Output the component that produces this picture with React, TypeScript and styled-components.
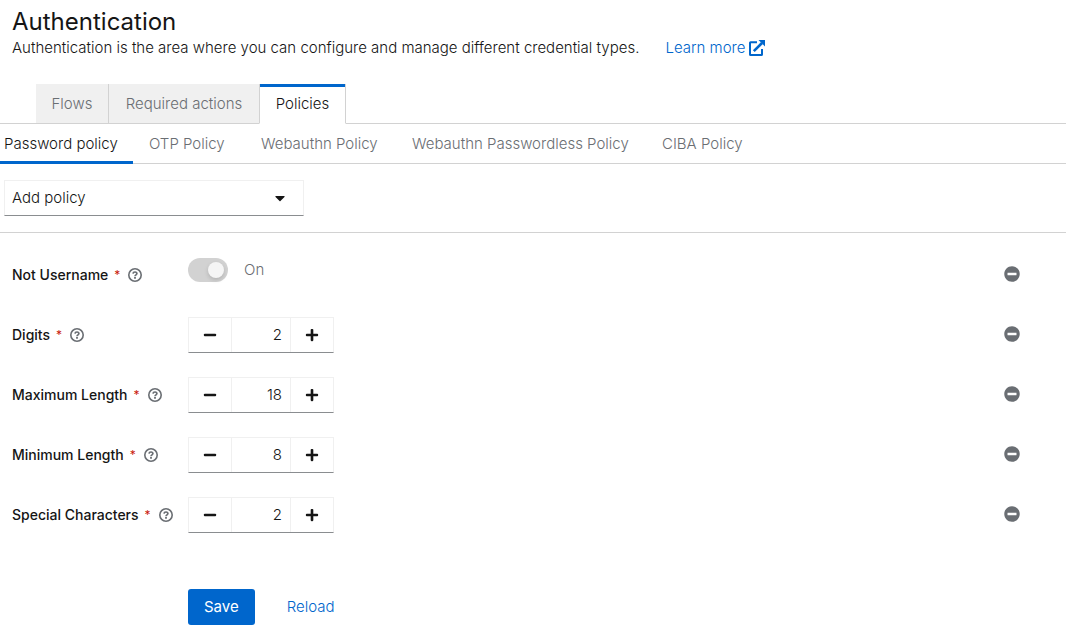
import React, { useId, useState } from 'react';
import styled, { createGlobalStyle, css } from 'styled-components';
import { FaCaretDown, FaMinus, FaMinusCircle, FaPlus } from 'react-icons/fa';

const GlobalStyle = createGlobalStyle`
  *, *::before, *::after { box-sizing: border-box; }
  body {
    margin: 0;
    background: #fff;
    color: #151515;
    font: 300 15px/24px Inter, "Liberation Sans", sans-serif;
  }
  button, input, select { font: inherit; color: inherit; margin: 0; }
  button { cursor: pointer; }
`;

const Header = styled.header`
  padding: 7px 12px 24px;
`;

const Title = styled.h1`
  margin: 0;
  font-size: 24px;
  line-height: 29px;
  font-weight: 400;
`;

const Description = styled.p`
  display: flex;
  align-items: center;
  gap: 26px;
  margin: 0;
`;

const DocLink = styled.a`
  display: inline-flex;
  align-items: center;
  gap: 4px;
  color: #06c;
  text-decoration: none;
`;

const BoxTabs = styled.nav`
  display: flex;
  padding-left: 36px;
  border-bottom: 1px solid #d2d2d2;
`;

const BoxTab = styled.button<{ $width: number; $active?: boolean }>`
  min-width: ${p => p.$width}px;
  height: 40px;
  margin-bottom: -1px;
  padding: 0 15px;
  border: 0;
  border-right: 1px solid #d2d2d2;
  border-bottom: 1px solid #d2d2d2;
  background: #f0f0f0;
  color: #6a6e73;
  &:nth-last-child(2) { border-right: 0; }
  ${p => p.$active && css`
    border-left: 1px solid #d2d2d2;
    border-bottom-color: #fff;
    background: linear-gradient(#fff, #fff) padding-box;
    color: #151515;
    box-shadow: inset 0 3px #06c;
  `}
`;

const LineTabs = styled.nav`
  display: flex;
  border-bottom: 1px solid #d2d2d2;
`;

const LineTab = styled.button<{ $width: number; $active?: boolean }>`
  min-width: ${p => p.$width}px;
  height: 40px;
  margin-bottom: -1px;
  padding: 0 15px 0 16px;
  border: 0;
  background: none;
  color: #6a6e73;
  text-align: left;
  &:first-child { padding-left: 4px; }
  ${p => p.$active && css`
    color: #151515;
    box-shadow: inset 0 -3px #06c;
  `}
`;

const Toolbar = styled.div`
  padding: 16px 4px;
  border-bottom: 1px solid #d2d2d2;
`;

const SelectBox = styled.div`
  display: grid;
  width: 300px;
  align-items: center;
  > * { grid-area: 1 / 1; }
  > svg { justify-self: end; margin-right: 16px; pointer-events: none; }
`;

const PolicySelect = styled.select`
  width: 100%;
  height: 36px;
  padding: 0 7px;
  appearance: none;
  border: 1px solid #f0f0f0;
  border-bottom-color: #8a8d90;
  border-radius: 0;
  background: #fff;
`;

const Form = styled.form`
  display: grid;
  gap: 24px;
  padding: 24px 38px 12px 12px;
`;

const Row = styled.div`
  display: grid;
  grid-template-columns: 176px 1fr auto;
  min-height: 36px;
`;

const LabelCell = styled.div`
  display: flex;
  align-items: center;
  font-size: 14px;
  font-weight: 500;
`;

const Required = styled.span`
  margin: 0 8px 0 6px;
  color: #c9190b;
  font-size: 12px;
  font-weight: 400;
`;

const IconButton = styled.button`
  display: flex;
  align-items: center;
  justify-content: center;
  padding: 0;
  border: 0;
  background: none;
  color: #6a6e73;
`;

const RemoveButton = styled(IconButton)`
  width: 32px;
  height: 34px;
  font-size: 16px;
`;

const Stepper = styled.div`
  display: flex;
  justify-self: start;
  height: 36px;
  border: 1px solid #f0f0f0;
  border-bottom-color: #8a8d90;
`;

const StepButton = styled.button`
  display: flex;
  align-items: center;
  justify-content: center;
  width: 42px;
  padding: 0;
  border: 0;
  background: none;
  font-size: 14px;
`;

const StepInput = styled.input`
  width: 60px;
  padding: 0 8px;
  border: solid #f0f0f0;
  border-width: 0 1px;
  border-radius: 0;
  background: none;
  text-align: right;
  appearance: textfield;
  &::-webkit-inner-spin-button { appearance: none; margin: 0; }
`;

const Toggle = styled.label`
  display: flex;
  align-items: center;
  align-self: start;
  gap: 16px;
  height: 26px;
  color: #6a6e73;
`;

const ToggleInput = styled.input`
  width: 40px;
  height: 24px;
  padding: 4px;
  appearance: none;
  border-radius: 12px;
  background: #d2d2d2;
  &::before {
    content: "";
    display: block;
    width: 16px;
    height: 16px;
    border-radius: 8px;
    background: #f5f5f5;
    box-shadow: 0 2px 4px rgba(3, 3, 3, 0.15);
  }
  &:checked::before { margin-left: 16px; }
`;

const Actions = styled.div`
  display: flex;
  gap: 16px;
  padding: 32px 0 0 176px;
`;

const ActionButton = styled.button<{ $primary?: boolean }>`
  height: 36px;
  padding: 0 16px;
  border: 0;
  border-radius: 3px;
  background: ${p => (p.$primary ? '#06c' : 'none')};
  color: ${p => (p.$primary ? '#fff' : '#06c')};
  font-weight: ${p => (p.$primary ? 400 : 300)};
`;

const ExternalIcon = () => (
  <svg width="16" height="16" viewBox="0 0 16 16" fill="none" stroke="currentColor" aria-hidden="true">
    <path d="M8 2.200H1.600Q1 2.200 1 2.800V14.400Q1 15 1.600 15H12.400Q13 15 13 14.400V9" strokeWidth="2" />
    <path d="M4.800 11.200 13 3" strokeWidth="2.600" />
    <path d="M9.500 0H16v6.500Z" fill="currentColor" stroke="none" />
  </svg>
);

const HelpIcon = () => (
  <svg width="14" height="14" viewBox="0 0 14 14" fill="none" stroke="currentColor" aria-hidden="true">
    <circle cx="7" cy="7" r="6.200" strokeWidth="1.600" />
    <path d="M5 5.600C5.200 3.400 8.900 3.500 8.900 5.600 8.900 6.900 7 6.800 7 8.300" strokeWidth="1.700" />
    <path d="M7 9.100v1.700" strokeWidth="1.800" />
  </svg>
);

function FieldLabel({ id, name }: { id: string; name: string }) {
  return (
    <LabelCell>
      <label htmlFor={id}>{name}</label>
      <Required aria-hidden="true">*</Required>
      <IconButton type="button" aria-label={`Help for ${name}`}><HelpIcon /></IconButton>
    </LabelCell>
  );
}

function NumberRow({ name, initial }: { name: string; initial: number }) {
  const id = useId();
  const [value, setValue] = useState(initial);
  return (
    <Row>
      <FieldLabel id={id} name={name} />
      <Stepper>
        <StepButton type="button" aria-label="Minus" onClick={() => setValue(value - 1)}><FaMinus /></StepButton>
        <StepInput id={id} type="number" value={value} onChange={e => setValue(Number(e.target.value))} />
        <StepButton type="button" aria-label="Plus" onClick={() => setValue(value + 1)}><FaPlus /></StepButton>
      </Stepper>
      <RemoveButton type="button" aria-label={`Remove ${name}`}><FaMinusCircle /></RemoveButton>
    </Row>
  );
}

const numberPolicies = [
  { name: 'Digits', initial: 2 },
  { name: 'Maximum Length', initial: 18 },
  { name: 'Minimum Length', initial: 8 },
  { name: 'Special Characters', initial: 2 },
];

const sectionTabs = [
  { name: 'Flows', width: 73 },
  { name: 'Required actions', width: 150 },
  { name: 'Policies', width: 87 },
];

const policyTabs = [
  { name: 'Password policy', width: 133 },
  { name: 'OTP Policy', width: 112 },
  { name: 'Webauthn Policy', width: 151 },
  { name: 'Webauthn Passwordless Policy', width: 250 },
  { name: 'CIBA Policy', width: 114 },
];

export default function App() {
  return (
    <>
      <GlobalStyle />
      <Header>
        <Title>Authentication</Title>
        <Description>
          Authentication is the area where you can configure and manage different credential types.
          <DocLink href="#learn-more">Learn more<ExternalIcon /></DocLink>
        </Description>
      </Header>
      <BoxTabs>
        {sectionTabs.map(tab => (
          <BoxTab key={tab.name} $width={tab.width} $active={tab.name === 'Policies'}>{tab.name}</BoxTab>
        ))}
      </BoxTabs>
      <main>
        <LineTabs>
          {policyTabs.map((tab, i) => (
            <LineTab key={tab.name} $width={tab.width} $active={i === 0}>{tab.name}</LineTab>
          ))}
        </LineTabs>
        <Toolbar>
          <SelectBox>
            <PolicySelect aria-label="Add policy"><option>Add policy</option></PolicySelect>
            <FaCaretDown size={16} />
          </SelectBox>
        </Toolbar>
        <Form onSubmit={e => e.preventDefault()}>
          <Row>
            <FieldLabel id="not-username" name="Not Username" />
            <Toggle>
              <ToggleInput id="not-username" type="checkbox" role="switch" defaultChecked disabled />
              On
            </Toggle>
            <RemoveButton type="button" aria-label="Remove Not Username"><FaMinusCircle /></RemoveButton>
          </Row>
          {numberPolicies.map(p => <NumberRow key={p.name} {...p} />)}
          <Actions>
            <ActionButton type="submit" $primary>Save</ActionButton>
            <ActionButton type="button">Reload</ActionButton>
          </Actions>
        </Form>
      </main>
    </>
  );
}
